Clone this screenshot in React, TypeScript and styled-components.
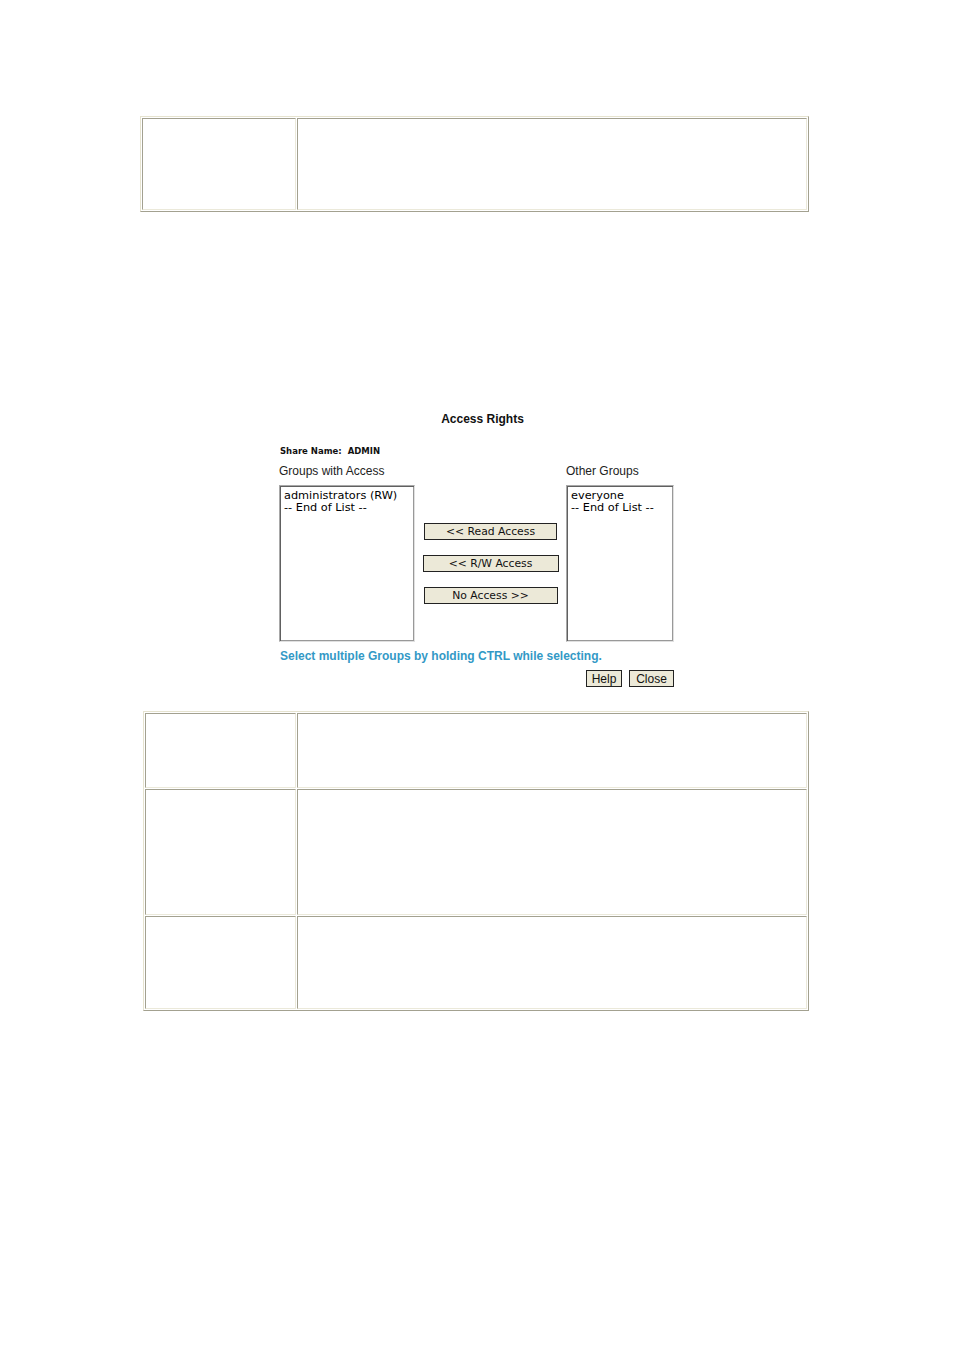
import React from "react";
import styled, { createGlobalStyle } from "styled-components";

const Global = createGlobalStyle`
  body {
    margin: 0;
    background: #fff;
    font-family: "Liberation Sans", Arial, sans-serif;
  }
`;

const Page = styled.div`
  width: 954px;
  height: 1350px;
  position: relative;
  overflow: hidden;
  padding-top: 116px;
  box-sizing: border-box;
`;

const Grid = styled.table<{ $left: number; $width: number }>`
  margin-left: ${(p) => p.$left}px;
  width: ${(p) => p.$width}px;
  border-collapse: separate;
  border-spacing: 1px;
  border-top: 1px solid #e6e3cf;
  border-left: 1px solid #e6e3cf;
  border-bottom: 1px solid #a3a190;
  border-right: 1px solid #a3a190;
  table-layout: fixed;
`;

const Cell = styled.td<{ $h: number; $w?: number }>`
  height: ${(p) => p.$h - 2}px;
  ${(p) => (p.$w ? `width: ${p.$w}px;` : "")}
  padding: 0;
  border-top: 1px solid #a3a190;
  border-left: 1px solid #a3a190;
  border-bottom: 1px solid #ebe9da;
  border-right: 1px solid #ebe9da;
  background: #fff;
`;

const Panel = styled.div`
  margin: 200px 0 0 279px;
  width: 395px;
  color: #000;
`;

const Title = styled.div`
  text-align: center;
  font-weight: bold;
  font-size: 12px;
  line-height: 14px;
  padding-left: 12px;
  color: #111;
`;

const ShareName = styled.div`
  margin-top: 19px;
  padding-left: 1px;
  font-family: "DejaVu Sans", Verdana, sans-serif;
  font-weight: bold;
  font-size: 8.5px;
  line-height: 12px;
  color: #111;
  span {
    margin-left: 6px;
  }
`;

const Labels = styled.div`
  margin-top: 7px;
  display: flex;
  justify-content: space-between;
  font-size: 12px;
  line-height: 14px;
  color: #222;
`;

const OtherLabel = styled.span`
  width: 108px;
`;

const Lists = styled.div`
  margin-top: 7px;
  display: flex;
  align-items: flex-start;
`;

const ListBox = styled.div<{ $w: number }>`
  width: ${(p) => p.$w}px;
  height: 157px;
  box-sizing: border-box;
  border-top: 1px solid #a8a8a8;
  border-left: 1px solid #a8a8a8;
  border-bottom: 1px solid #e0e0e0;
  border-right: 1px solid #e0e0e0;
  box-shadow: inset 1px 1px 0 #606060, inset -1px -1px 0 #999;
  padding: 4px 4px 2px;
  font-family: "DejaVu Sans", Verdana, sans-serif;
  font-size: 11.3px;
  line-height: 12px;
  color: #000;
`;

const Actions = styled.div`
  flex: 1;
  display: flex;
  flex-direction: column;
  align-items: center;
  gap: 15px;
  padding-top: 38px;
`;

const MoveButton = styled.button<{ $w: number }>`
  width: ${(p) => p.$w}px;
  height: 17px;
  padding: 0;
  background: #ece9d8;
  border: 1px solid #222;
  font-family: "DejaVu Sans", Verdana, sans-serif;
  font-size: 10.8px;
  line-height: 14px;
  color: #111;
`;

const Hint = styled.div`
  margin-top: 7px;
  padding-left: 1px;
  font-weight: bold;
  font-size: 12px;
  line-height: 14px;
  color: #3399c6;
`;

const Footer = styled.div`
  margin-top: 7px;
  display: flex;
  justify-content: flex-end;
  gap: 7px;
`;

const SmallButton = styled.button<{ $w: number }>`
  width: ${(p) => p.$w}px;
  height: 17px;
  padding: 0;
  background: #ece9d8;
  border: 1px solid #222;
  font-family: "Liberation Sans", Arial, sans-serif;
  font-size: 12px;
  line-height: 14px;
  color: #111;
`;

const LowerGrid = styled(Grid)`
  margin-top: 24px;
`;

export default function App() {
  return (
    <>
      <Global />
      <Page>
        <Grid $left={140} $width={669}>
          <tbody>
            <tr>
              <Cell $h={92} $w={152} />
              <Cell $h={92} />
            </tr>
          </tbody>
        </Grid>

        <Panel>
          <Title>Access Rights</Title>
          <ShareName>
            Share Name:<span>ADMIN</span>
          </ShareName>
          <Labels>
            <span>Groups with Access</span>
            <OtherLabel>Other Groups</OtherLabel>
          </Labels>
          <Lists>
            <ListBox $w={136}>
              administrators (RW)
              <br />
              -- End of List --
            </ListBox>
            <Actions>
              <MoveButton $w={133}>&lt;&lt; Read Access</MoveButton>
              <MoveButton $w={136}>&lt;&lt; R/W Access</MoveButton>
              <MoveButton $w={134}>No Access &gt;&gt;</MoveButton>
            </Actions>
            <ListBox $w={108}>
              everyone
              <br />
              -- End of List --
            </ListBox>
          </Lists>
          <Hint>Select multiple Groups by holding CTRL while selecting.</Hint>
          <Footer>
            <SmallButton $w={36}>Help</SmallButton>
            <SmallButton $w={45}>Close</SmallButton>
          </Footer>
        </Panel>

        <LowerGrid $left={143} $width={666}>
          <tbody>
            <tr>
              <Cell $h={75} $w={149} />
              <Cell $h={75} />
            </tr>
            <tr>
              <Cell $h={126} $w={149} />
              <Cell $h={126} />
            </tr>
            <tr>
              <Cell $h={93} $w={149} />
              <Cell $h={93} />
            </tr>
          </tbody>
        </LowerGrid>
      </Page>
    </>
  );
}
